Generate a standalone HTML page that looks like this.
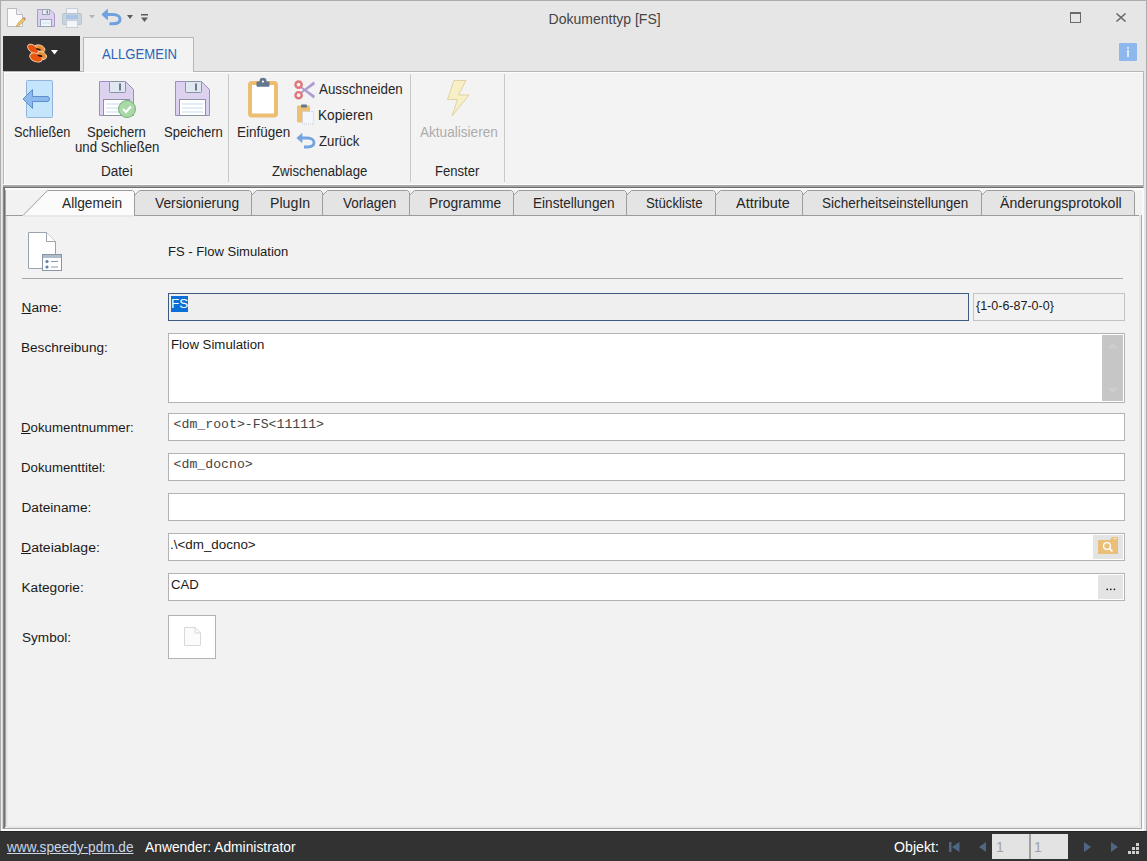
<!DOCTYPE html>
<html><head><meta charset="utf-8">
<style>
html,body{margin:0;padding:0;}
body{width:1147px;height:861px;overflow:hidden;background:#e6e6e6;position:relative;font-family:"Liberation Sans",sans-serif;color:#262626;}
.a{position:absolute;}
.t{position:absolute;white-space:nowrap;line-height:1;}
svg{position:absolute;overflow:visible;}
</style></head><body>
<!-- window border -->
<div class="a" style="left:0;top:0;width:1145px;height:859px;border:1px solid #acacac;"></div>
<div class="a" style="left:1px;top:1px;width:1145px;height:830px;background:#e6e6e6;"></div>

<!-- title -->

<!-- title buttons -->
<div class="a" style="left:1070px;top:12px;width:9px;height:8px;border:1px solid #6a6a6a;border-top-width:2px;"></div>
<svg style="left:1116px;top:13px" width="10" height="9" viewBox="0 0 10 9"><path d="M0.5 0.5 L9.5 8.5 M9.5 0.5 L0.5 8.5" stroke="#666666" stroke-width="1.6"/></svg>

<!-- quick access icons -->
<svg style="left:7px;top:8px" width="18" height="20" viewBox="0 0 18 20">
  <path d="M0.5 0.5 H9.5 L15.5 6.5 V18.5 H0.5 Z" fill="#fbfbfb" stroke="#b9bcc2"/>
  <path d="M9.5 0.5 V6.5 H15.5" fill="#eef0f3" stroke="#b9bcc2"/>
  <path d="M9 19 L11 15 L16 10 L18 12 L13 17 Z" fill="#e9c56a" stroke="#b89a4a" stroke-width="0.6"/>
  <path d="M16 10 L17 9 L19 11 L18 12 Z" fill="#d97474"/>
</svg>
<svg style="left:37px;top:9px" width="18" height="18" viewBox="0 0 18 18">
  <path d="M0.5 0.5 H13 L17.5 5 V17.5 H0.5 Z" fill="#dcd2f0" stroke="#ab9bcb"/>
  <rect x="5.5" y="0.5" width="7" height="5" fill="#e6ecf3" stroke="#9aa4b3"/>
  <rect x="9.5" y="1.5" width="1.5" height="3" fill="#7b8594"/>
  <rect x="3.5" y="10.5" width="11" height="7" fill="#eef5fc" stroke="#9aa4b3"/>
  <path d="M5 14 H13" stroke="#cfe0f0" stroke-width="1"/>
</svg>
<svg style="left:62px;top:8px" width="20" height="20" viewBox="0 0 20 20">
  <rect x="4.5" y="0.5" width="11" height="6" fill="#f3f5f8" stroke="#c8cfd8"/>
  <rect x="0.5" y="5.5" width="19" height="11" rx="1" fill="#c9d3df" stroke="#b9c3cf"/>
  <rect x="4" y="7" width="12" height="4" fill="#a9c4e6"/>
  <rect x="4.5" y="12.5" width="11" height="7" fill="#f3f5f8" stroke="#c8cfd8"/>
</svg>
<svg style="left:89px;top:15px" width="6" height="4" viewBox="0 0 6 4"><path d="M0 0 H6 L3 3.5 Z" fill="#b4b4b4"/></svg>
<svg style="left:101px;top:9px" width="21" height="17" viewBox="0 0 21 17">
  <path d="M0.8 5.5 L6.5 0.3 L6.5 10.7 Z" fill="#70a0e0" stroke="#70a0e0" stroke-width="0.8" stroke-linejoin="round"/>
  <path d="M5 5.5 H12 C16.5 5.5 19 7.8 19 10.3 C19 13 16.5 14.8 12 14.8 H8.5" fill="none" stroke="#70a0e0" stroke-width="3"/>
</svg>
<svg style="left:127px;top:15px" width="6" height="4" viewBox="0 0 6 4"><path d="M0 0 H6 L3 4 Z" fill="#5c5c5c"/></svg>
<svg style="left:141px;top:14px" width="7" height="9" viewBox="0 0 7 9"><rect x="0" y="0" width="7" height="1.5" fill="#5c5c5c"/><path d="M0 3.5 H7 L3.5 8 Z" fill="#5c5c5c"/></svg>

<!-- app button -->
<div class="a" style="left:3px;top:36px;width:77px;height:35px;background:#2f2f2f;"></div>
<svg style="left:24px;top:40px" width="28" height="26" viewBox="0 0 28 26">
  <g stroke="#f6d2b4" stroke-width="0.9">
  <ellipse cx="15.5" cy="8.7" rx="5.6" ry="3.6" transform="rotate(18 15.5 8.7)" fill="#ef8a2e"/>
  <ellipse cx="17" cy="15.5" rx="5.8" ry="3.8" transform="rotate(20 17 15.5)" fill="#ef8a2e"/>
  <ellipse cx="9" cy="9" rx="6.3" ry="3.6" transform="rotate(38 9 9)" fill="#e8520e"/>
  <ellipse cx="12" cy="17.5" rx="6.6" ry="4.2" transform="rotate(22 12 17.5)" fill="#e9560e"/>
  </g>
  <ellipse cx="14.5" cy="9.3" rx="2.6" ry="0.9" transform="rotate(18 14.5 9.3)" fill="#2a1608"/>
  <ellipse cx="16" cy="15.8" rx="2.6" ry="1" transform="rotate(18 16 15.8)" fill="#2a1608"/>
</svg>
<svg style="left:51px;top:50px" width="7" height="5" viewBox="0 0 7 5"><path d="M0 0 H7 L3.5 4.5 Z" fill="#ffffff"/></svg>

<!-- ribbon tab -->
<div class="a" style="left:83px;top:37px;width:109px;height:35px;background:#f3f3f3;border:1px solid #b6b6b6;border-bottom:none;"></div>

<!-- info button -->
<div class="a" style="left:1119px;top:43px;width:18px;height:18px;background:#8cb8ee;border-radius:1px;"></div>
<div class="a" style="left:1127px;top:47px;width:2px;height:2px;background:#dbeafc;"></div>
<div class="a" style="left:1127px;top:50px;width:2px;height:7px;background:#dbeafc;"></div>

<!-- ribbon body -->
<div class="a" style="left:3px;top:71px;width:1139px;height:113px;background:#f3f3f3;border:1px solid #b6b6b6;border-bottom:none;box-shadow:inset 1px 1px 0 #fdfdfd;"></div>
<div class="a" style="left:84px;top:71px;width:109px;height:1px;background:#f3f3f3;"></div>


<!-- ribbon group: Datei -->
<svg style="left:22px;top:80px" width="32" height="39" viewBox="0 0 32 39">
  <rect x="4.5" y="0.5" width="26" height="37" rx="1" fill="#c4e5fb" stroke="#8fb3da"/>
  <path d="M1 19 L10.5 9.5 V16.5 H25 A1.5 1.5 0 0 1 25 21.5 H10.5 V28.5 Z" fill="#8cb9ee" stroke="#5f8fc8" stroke-width="1" stroke-linejoin="round"/>
</svg>

<svg style="left:99px;top:81px" width="40" height="38" viewBox="0 0 40 38">
  <path d="M0.5 0.5 H26.5 L34.5 8.5 V34.5 H0.5 Z" fill="#dcd2ef" stroke="#a08cc0"/>
  <rect x="10.5" y="0.5" width="16" height="11" rx="1" fill="#dfe7f0" stroke="#8a93a2"/>
  <rect x="20" y="2.5" width="2" height="7" fill="#6f7a8a"/>
  <rect x="4.5" y="18.5" width="26" height="16" fill="#ffffff" stroke="#8a93a2"/>
  <path d="M7 23 H28 M7 27 H28 M7 31 H28" stroke="#c7dbef" stroke-width="1"/>
  <circle cx="28" cy="28" r="8.5" fill="#a9d8a9" stroke="#73b373" stroke-width="1"/>
  <path d="M24 28 L27 31 L32 25.5" fill="none" stroke="#ffffff" stroke-width="2.2"/>
</svg>

<svg style="left:175px;top:81px" width="36" height="36" viewBox="0 0 36 36">
  <path d="M0.5 0.5 H26.5 L34.5 8.5 V34.5 H0.5 Z" fill="#dcd2ef" stroke="#a08cc0"/>
  <rect x="10.5" y="0.5" width="16" height="11" rx="1" fill="#dfe7f0" stroke="#8a93a2"/>
  <rect x="20" y="2.5" width="2" height="7" fill="#6f7a8a"/>
  <rect x="4.5" y="18.5" width="26" height="16" fill="#ffffff" stroke="#8a93a2"/>
  <path d="M7 23 H28 M7 27 H28 M7 31 H28" stroke="#c7dbef" stroke-width="1"/>
</svg>
<div class="a" style="left:228px;top:74px;width:1px;height:108px;background:#c9c9c9;"></div>

<!-- Zwischenablage -->
<svg style="left:247px;top:78px" width="32" height="41" viewBox="0 0 32 41">
  <rect x="3" y="5" width="26" height="32.5" rx="2" fill="#ffffff" stroke="#ebbe72" stroke-width="4"/>
  <rect x="9.5" y="3.5" width="13" height="5.3" rx="1" fill="#63778f"/>
  <path d="M12.5 4 V3 A3.5 3.2 0 0 1 19.5 3 V4 Z" fill="#63778f"/>
  <circle cx="16" cy="3.6" r="1.1" fill="#ffffff"/>
</svg>

<svg style="left:294px;top:80px" width="22" height="20" viewBox="0 0 22 20">
  <path d="M6 6.5 L19.5 17.5 L20 16 Z" fill="#c2b2e0" stroke="#ad9bd2" stroke-width="1.6" stroke-linejoin="round"/>
  <path d="M6 13.5 L19.5 2.5 L20 4 Z" fill="#c2b2e0" stroke="#ad9bd2" stroke-width="1.6" stroke-linejoin="round"/>
  <circle cx="4.6" cy="4.6" r="3.1" fill="#f3f3f3" stroke="#e07478" stroke-width="2.4"/>
  <circle cx="4.6" cy="15.2" r="3.1" fill="#f3f3f3" stroke="#e07478" stroke-width="2.4"/>
</svg>

<svg style="left:296px;top:104px" width="20" height="21" viewBox="0 0 20 21">
  <rect x="1" y="1.5" width="13" height="17" rx="1" fill="#edc075"/>
  <rect x="5" y="0.5" width="6" height="3" rx="1" fill="#63778f"/>
  <rect x="6.5" y="7.5" width="11" height="12.5" fill="#f3f7fc" stroke="#c9ced6" stroke-dasharray="1 1"/>
</svg>

<svg style="left:296px;top:133px" width="20" height="16" viewBox="0 0 20 16">
  <path d="M0.8 5 L6 0.5 L6 9.5 Z" fill="#74a3e2" stroke="#74a3e2" stroke-width="0.8" stroke-linejoin="round"/>
  <path d="M4.5 5 H11.5 C15.5 5 18 7.2 18 9.6 C18 12.2 15.5 14 11.5 14 H8" fill="none" stroke="#74a3e2" stroke-width="2.8"/>
</svg>
<div class="a" style="left:410px;top:74px;width:1px;height:108px;background:#c9c9c9;"></div>

<!-- Fenster -->
<svg style="left:447px;top:80px" width="23" height="37" viewBox="0 0 23 37">
  <path d="M7 0.5 H19 L11.5 15 H22 L5 36 L10.5 19.5 H0.5 Z" fill="#f8efc6" stroke="#dfd3a2" stroke-width="1" stroke-linejoin="round"/>
</svg>
<div class="a" style="left:504px;top:74px;width:1px;height:108px;background:#c9c9c9;"></div>


<!-- separator under ribbon -->
<div class="a" style="left:3px;top:184px;width:1141px;height:1px;background:#fcfcfc;"></div>
<div class="a" style="left:3px;top:185px;width:1141px;height:2px;background:#a8a8a8;"></div>
<div class="a" style="left:3px;top:187px;width:1141px;height:1px;background:#6e6e6e;"></div>

<!-- content panel -->
<div class="a" style="left:1px;top:188px;width:1145px;height:643px;background:#f2f2f2;"></div>
<div class="a" style="left:1px;top:188px;width:1px;height:643px;background:#ececec;"></div>
<div class="a" style="left:2px;top:188px;width:1px;height:643px;background:#d4d4d4;"></div>
<div class="a" style="left:3px;top:188px;width:1px;height:641px;background:#8c8c8c;"></div>
<div class="a" style="left:4px;top:188px;width:1px;height:641px;background:#6e6e6e;"></div>
<div class="a" style="left:5px;top:190px;width:1px;height:637px;background:#a8a8a8;"></div>
<div class="a" style="left:6px;top:215px;width:1px;height:612px;background:#e2e2e2;"></div>
<div class="a" style="left:7px;top:215px;width:1px;height:612px;background:#eaeaea;"></div>
<div class="a" style="left:5px;top:188px;width:1137px;height:2px;background:#fcfcfc;"></div>
<div class="a" style="left:1139px;top:215px;width:2px;height:612px;background:#e6e6e6;"></div>
<div class="a" style="left:1141px;top:215px;width:1px;height:614px;background:#a8a8a8;"></div>
<div class="a" style="left:8px;top:826px;width:1131px;height:2px;background:#e8e8e8;"></div>
<div class="a" style="left:4px;top:828px;width:1138px;height:1px;background:#a8a8a8;"></div>
<div class="a" style="left:1px;top:829px;width:1142px;height:2px;background:#fafafa;"></div>
<div class="a" style="left:1142px;top:188px;width:2px;height:643px;background:#fafafa;"></div>
<div class="a" style="left:1144px;top:188px;width:2px;height:643px;background:#e6e6e6;"></div>
<div class="a" style="left:1143px;top:71px;width:1px;height:117px;background:#b6b6b6;"></div>

<!-- tab strip -->
<svg style="left:0;top:188px" width="1147" height="32" viewBox="0 188 1147 32">
  <g stroke="#9c9c9c" stroke-width="1">
    <path d="M134.5 215.5 V195.5 L139.5 190.5 H249.5 L251.5 192.5 V215.5 Z" fill="#e4e4e4"/>
    <path d="M251.5 215.5 V195.5 L256.5 190.5 H320.5 L322.5 192.5 V215.5 Z" fill="#e4e4e4"/>
    <path d="M322.5 215.5 V195.5 L327.5 190.5 H407.5 L409.5 192.5 V215.5 Z" fill="#e4e4e4"/>
    <path d="M409.5 215.5 V195.5 L414.5 190.5 H511.5 L513.5 192.5 V215.5 Z" fill="#e4e4e4"/>
    <path d="M513.5 215.5 V195.5 L518.5 190.5 H624.5 L626.5 192.5 V215.5 Z" fill="#e4e4e4"/>
    <path d="M626.5 215.5 V195.5 L631.5 190.5 H713.5 L715.5 192.5 V215.5 Z" fill="#e4e4e4"/>
    <path d="M715.5 215.5 V195.5 L720.5 190.5 H800.5 L802.5 192.5 V215.5 Z" fill="#e4e4e4"/>
    <path d="M802.5 215.5 V195.5 L807.5 190.5 H979.5 L981.5 192.5 V215.5 Z" fill="#e4e4e4"/>
    <path d="M981.5 215.5 V195.5 L986.5 190.5 H1132.5 L1134.5 192.5 V215.5 Z" fill="#e4e4e4"/>
    <path d="M5 215.5 H23 L47.5 190.5 H132.5 L134.5 192.5 V215.5" fill="#fbfbfb"/>
    <path d="M134.5 215.5 H1139" fill="none"/>
  </g>
  <rect x="23" y="215" width="111" height="2" fill="#e8e8e8"/>
</svg>

<!-- header -->
<svg style="left:28px;top:232px" width="35" height="40" viewBox="0 0 35 40">
  <path d="M0.5 0.5 H18.5 L27.5 9.5 V36.5 H0.5 Z" fill="#ffffff" stroke="#9ba3ad"/>
  <path d="M18.5 0.5 V9.5 H27.5" fill="#ffffff" stroke="#9ba3ad"/>
  <rect x="14.5" y="22.5" width="19" height="16" fill="#ffffff" stroke="#8c96a2"/>
  <rect x="15" y="23" width="18" height="3" fill="#aebbcb"/>
  <circle cx="19" cy="29.5" r="1.6" fill="#5b7fb5"/>
  <circle cx="19" cy="35" r="1.6" fill="#5b7fb5"/>
  <path d="M23 29.5 H30 M23 35 H30" stroke="#8c96a2" stroke-width="1.2"/>
</svg>
<div class="a" style="left:22px;top:278px;width:1101px;height:1px;background:#a8a8a8;"></div>

<!-- labels -->

<!-- fields -->
<div class="a" style="left:168px;top:293px;width:799px;height:26px;background:#efefef;border:1px solid #3e5a80;"></div>
<div class="a" style="left:171px;top:296px;width:17px;height:16px;background:#0a6fd6;"></div>
<div class="a" style="left:973px;top:293px;width:150px;height:26px;background:#f2f2f2;border:1px solid #c3c3c3;"></div>

<div class="a" style="left:168px;top:333px;width:955px;height:68px;background:#ffffff;border:1px solid #b3b3b3;"></div>
<div class="a" style="left:1102px;top:335px;width:21px;height:66px;background:#c6c6c6;"></div>
<svg style="left:1107px;top:343px" width="11" height="6" viewBox="0 0 11 6"><path d="M0 5.5 L5.5 0 L11 5.5 Z" fill="#cdcdcd"/></svg>
<svg style="left:1107px;top:388px" width="11" height="6" viewBox="0 0 11 6"><path d="M0 0 L5.5 5.5 L11 0 Z" fill="#cdcdcd"/></svg>

<div class="a" style="left:168px;top:413px;width:955px;height:26px;background:#ffffff;border:1px solid #b3b3b3;"></div>
<div class="a" style="left:168px;top:453px;width:955px;height:26px;background:#ffffff;border:1px solid #b3b3b3;"></div>
<div class="a" style="left:168px;top:493px;width:955px;height:26px;background:#ffffff;border:1px solid #b3b3b3;"></div>
<div class="a" style="left:168px;top:533px;width:955px;height:26px;background:#ffffff;border:1px solid #b3b3b3;"></div>
<div class="a" style="left:1093px;top:535px;width:30px;height:24px;background:#e4e4e4;"></div>
<svg style="left:1098px;top:537px" width="21" height="18" viewBox="0 0 21 18">
  <path d="M0 3 H12 L14 0 H20 V17 H0 Z" fill="#e8c07a"/>
  <rect x="15" y="1" width="4" height="1.2" fill="#f6e3bd"/>
  <circle cx="9" cy="9" r="3.4" fill="none" stroke="#ffffff" stroke-width="1.3"/>
  <path d="M11.5 11.5 L14.5 14.5" stroke="#ffffff" stroke-width="1.5"/>
</svg>
<div class="a" style="left:168px;top:573px;width:955px;height:26px;background:#ffffff;border:1px solid #b3b3b3;"></div>
<div class="a" style="left:1098px;top:575px;width:25px;height:24px;background:#e4e4e4;"></div>
<svg style="left:1105px;top:587px" width="12" height="4" viewBox="0 0 12 4" fill="#222"><circle cx="2.2" cy="2.3" r="0.9"/><circle cx="5.8" cy="2.3" r="0.9"/><circle cx="9.4" cy="2.3" r="0.9"/></svg>

<div class="a" style="left:168px;top:615px;width:46px;height:42px;background:#ffffff;border:1px solid #b3b3b3;"></div>
<svg style="left:184px;top:627px" width="18" height="20" viewBox="0 0 18 20">
  <path d="M0.5 0.5 H11 L16.5 6 V18.5 H0.5 Z" fill="#fbfbfb" stroke="#d8d8d8"/>
  <path d="M11 0.5 V6 H16.5" fill="none" stroke="#d8d8d8"/>
</svg>

<!-- status bar -->
<div class="a" style="left:0;top:831px;width:1147px;height:30px;background:#323232;"></div><div class="a" style="left:0;top:831px;width:1147px;height:1px;background:#232323;"></div>
<svg style="left:949px;top:842px" width="11" height="11" viewBox="0 0 11 11"><rect x="0" y="0" width="2.5" height="10" fill="#4f6784"/><path d="M10.5 0 V10 L3 5 Z" fill="#4f6784"/></svg>
<svg style="left:979px;top:842px" width="7" height="11" viewBox="0 0 7 11"><path d="M7 0 V10 L0 5 Z" fill="#4f6784"/></svg>
<div class="a" style="left:992px;top:834px;width:37px;height:25px;background:#e3e3e3;"></div>
<div class="a" style="left:1029px;top:834px;width:2px;height:25px;background:#a0a0a0;"></div>
<div class="a" style="left:1031px;top:834px;width:37px;height:25px;background:#e3e3e3;"></div>
<svg style="left:1084px;top:842px" width="7" height="11" viewBox="0 0 7 11"><path d="M0 0 V10 L7 5 Z" fill="#4f6784"/></svg>
<svg style="left:1111px;top:842px" width="7" height="11" viewBox="0 0 7 11"><path d="M0 0 V10 L7 5 Z" fill="#4f6784"/></svg>
<svg style="left:1128px;top:843px" width="12" height="12" viewBox="0 0 12 12" fill="#cfcfcf">
  <rect x="8" y="0" width="3" height="3"/><rect x="4" y="4" width="3" height="3"/><rect x="8" y="4" width="3" height="3"/>
  <rect x="0" y="8" width="3" height="3"/><rect x="4" y="8" width="3" height="3"/><rect x="8" y="8" width="3" height="3"/>
</svg>

<div class="t" style="left:548.60px;top:12px;font-size:14px;color:#444444;font-family:'Liberation Sans';">Dokumenttyp [FS]</div>
<div class="t" style="left:102.00px;top:47px;font-size:14px;color:#2b65b5;font-family:'Liberation Sans';transform:scaleX(0.9364);transform-origin:0 0;">ALLGEMEIN</div>
<div class="t" style="left:13.60px;top:125px;font-size:14px;color:#262626;font-family:'Liberation Sans';transform:scaleX(0.9062);transform-origin:0 0;">Schließen</div>
<div class="t" style="left:87.10px;top:125px;font-size:14px;color:#262626;font-family:'Liberation Sans';transform:scaleX(0.9317);transform-origin:0 0;">Speichern</div>
<div class="t" style="left:74.50px;top:140px;font-size:14px;color:#262626;font-family:'Liberation Sans';transform:scaleX(0.9435);transform-origin:0 0;">und Schließen</div>
<div class="t" style="left:163.50px;top:125px;font-size:14px;color:#262626;font-family:'Liberation Sans';transform:scaleX(0.9317);transform-origin:0 0;">Speichern</div>
<div class="t" style="left:101.03px;top:164px;font-size:14px;color:#262626;font-family:'Liberation Sans';transform:scaleX(0.9692);transform-origin:0 0;">Datei</div>
<div class="t" style="left:236.54px;top:125px;font-size:14px;color:#262626;font-family:'Liberation Sans';transform:scaleX(0.9629);transform-origin:0 0;">Einfügen</div>
<div class="t" style="left:318.50px;top:82px;font-size:14px;color:#262626;font-family:'Liberation Sans';transform:scaleX(0.9522);transform-origin:0 0;">Ausschneiden</div>
<div class="t" style="left:317.52px;top:108px;font-size:14px;color:#262626;font-family:'Liberation Sans';transform:scaleX(0.9769);transform-origin:0 0;">Kopieren</div>
<div class="t" style="left:318.50px;top:134px;font-size:14px;color:#262626;font-family:'Liberation Sans';transform:scaleX(0.9455);transform-origin:0 0;">Zurück</div>
<div class="t" style="left:272.30px;top:164px;font-size:14px;color:#262626;font-family:'Liberation Sans';transform:scaleX(0.9419);transform-origin:0 0;">Zwischenablage</div>
<div class="t" style="left:419.60px;top:125px;font-size:14px;color:#acacac;font-family:'Liberation Sans';transform:scaleX(0.9702);transform-origin:0 0;">Aktualisieren</div>
<div class="t" style="left:434.87px;top:164px;font-size:14px;color:#262626;font-family:'Liberation Sans';transform:scaleX(0.9338);transform-origin:0 0;">Fenster</div>
<div class="t" style="left:62.00px;top:196px;font-size:14px;color:#262626;font-family:'Liberation Sans';transform:scaleX(0.9788);transform-origin:0 0;">Allgemein</div>
<div class="t" style="left:154.50px;top:196px;font-size:14px;color:#262626;font-family:'Liberation Sans';transform:scaleX(0.9820);transform-origin:0 0;">Versionierung</div>
<div class="t" style="left:270.29px;top:196px;font-size:14px;color:#262626;font-family:'Liberation Sans';transform:scaleX(1.0129);transform-origin:0 0;">PlugIn</div>
<div class="t" style="left:342.50px;top:196px;font-size:14px;color:#262626;font-family:'Liberation Sans';transform:scaleX(0.9654);transform-origin:0 0;">Vorlagen</div>
<div class="t" style="left:428.61px;top:196px;font-size:14px;color:#262626;font-family:'Liberation Sans';transform:scaleX(0.9883);transform-origin:0 0;">Programme</div>
<div class="t" style="left:532.63px;top:196px;font-size:14px;color:#262626;font-family:'Liberation Sans';transform:scaleX(0.9699);transform-origin:0 0;">Einstellungen</div>
<div class="t" style="left:645.90px;top:196px;font-size:14px;color:#262626;font-family:'Liberation Sans';transform:scaleX(0.9447);transform-origin:0 0;">Stückliste</div>
<div class="t" style="left:735.50px;top:196px;font-size:14px;color:#262626;font-family:'Liberation Sans';transform:scaleX(1.0315);transform-origin:0 0;">Attribute</div>
<div class="t" style="left:821.60px;top:196px;font-size:14px;color:#262626;font-family:'Liberation Sans';transform:scaleX(0.9644);transform-origin:0 0;">Sicherheitseinstellungen</div>
<div class="t" style="left:1000.20px;top:196px;font-size:14px;color:#262626;font-family:'Liberation Sans';transform:scaleX(1.0089);transform-origin:0 0;">Änderungsprotokoll</div>
<div class="t" style="left:167.55px;top:245px;font-size:13.7px;color:#1a1a1a;font-family:'Liberation Sans';transform:scaleX(0.9531);transform-origin:0 0;">FS - Flow Simulation</div>
<div class="t" style="left:21.60px;top:301px;font-size:13.7px;color:#1a1a1a;font-family:'Liberation Sans';"><u>N</u>ame:</div>
<div class="t" style="left:21.31px;top:341px;font-size:13.7px;color:#1a1a1a;font-family:'Liberation Sans';transform:scaleX(0.9918);transform-origin:0 0;">Beschreibung:</div>
<div class="t" style="left:21.43px;top:421px;font-size:13.7px;color:#1a1a1a;font-family:'Liberation Sans';transform:scaleX(0.9687);transform-origin:0 0;"><u>D</u>okumentnummer:</div>
<div class="t" style="left:21.43px;top:461px;font-size:13.7px;color:#1a1a1a;font-family:'Liberation Sans';transform:scaleX(0.9664);transform-origin:0 0;">Dokumenttitel:</div>
<div class="t" style="left:21.40px;top:501px;font-size:13.7px;color:#1a1a1a;font-family:'Liberation Sans';">Dateiname:</div>
<div class="t" style="left:21.37px;top:541px;font-size:13.7px;color:#1a1a1a;font-family:'Liberation Sans';transform:scaleX(1.0259);transform-origin:0 0;"><u>D</u>ateiablage:</div>
<div class="t" style="left:21.40px;top:581px;font-size:13.7px;color:#1a1a1a;font-family:'Liberation Sans';">Kategorie:</div>
<div class="t" style="left:22.40px;top:631px;font-size:13.7px;color:#1a1a1a;font-family:'Liberation Sans';transform:scaleX(0.9930);transform-origin:0 0;">Symbol:</div>
<div class="t" style="left:171.02px;top:297px;font-size:13.7px;color:#ffffff;font-family:'Liberation Sans';transform:scaleX(0.9779);transform-origin:0 0;">FS</div>
<div class="t" style="left:976.40px;top:299px;font-size:13.7px;color:#1a1a1a;font-family:'Liberation Sans';transform:scaleX(0.9130);transform-origin:0 0;">{1-0-6-87-0-0}</div>
<div class="t" style="left:170.53px;top:338px;font-size:13.7px;color:#1a1a1a;font-family:'Liberation Sans';transform:scaleX(0.9664);transform-origin:0 0;">Flow Simulation</div>
<div class="t" style="left:173.60px;top:418px;font-size:13.2px;color:#444444;font-family:'Liberation Mono';">&lt;dm_root&gt;-FS&lt;11111&gt;</div>
<div class="t" style="left:173.60px;top:458px;font-size:13.2px;color:#444444;font-family:'Liberation Mono';">&lt;dm_docno&gt;</div>
<div class="t" style="left:169.92px;top:538px;font-size:13.7px;color:#1a1a1a;font-family:'Liberation Sans';transform:scaleX(0.9790);transform-origin:0 0;">.\&lt;dm_docno&gt;</div>
<div class="t" style="left:170.90px;top:578px;font-size:13.7px;color:#1a1a1a;font-family:'Liberation Sans';transform:scaleX(0.9616);transform-origin:0 0;">CAD</div>
<div class="t" style="left:6.87px;top:840px;font-size:14px;color:#c9d5e8;font-family:'Liberation Sans';transform:scaleX(0.9736);transform-origin:0 0;text-decoration:underline;">www.speedy-pdm.de</div>
<div class="t" style="left:144.70px;top:840px;font-size:14px;color:#ffffff;font-family:'Liberation Sans';transform:scaleX(0.9875);transform-origin:0 0;">Anwender: Administrator</div>
<div class="t" style="left:894.00px;top:840px;font-size:14px;color:#ffffff;font-family:'Liberation Sans';transform:scaleX(1.0124);transform-origin:0 0;">Objekt:</div>
<div class="t" style="left:996.00px;top:840px;font-size:14px;color:#a0a0a0;font-family:'Liberation Sans';">1</div>
<div class="t" style="left:1034.00px;top:840px;font-size:14px;color:#a0a0a0;font-family:'Liberation Sans';">1</div>
</body></html>
